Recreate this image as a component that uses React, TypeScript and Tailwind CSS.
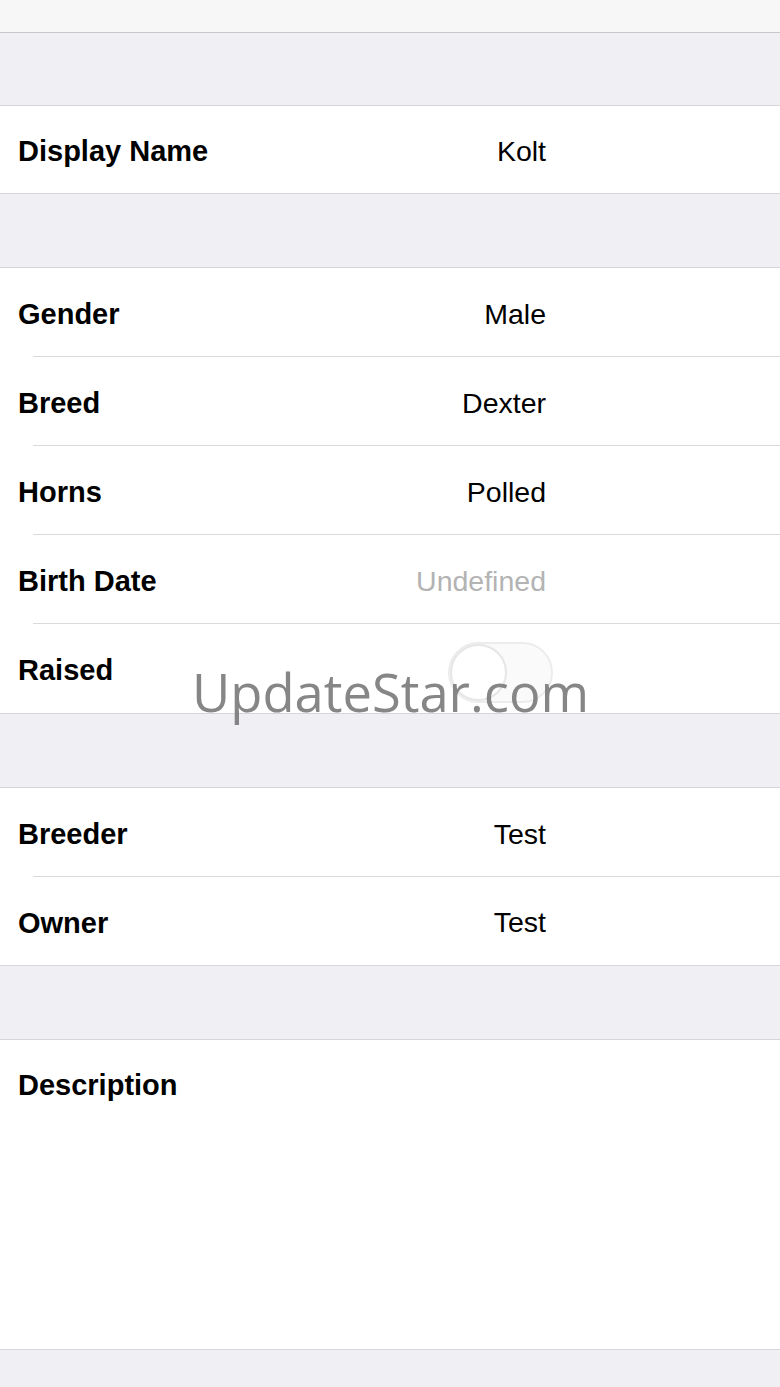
import React from "react";

const font = { fontFamily: '"Liberation Sans", Arial, sans-serif' };

function Gap({ h = "h-[73px]" }: { h?: string }) {
  return <div className={`${h} bg-[#efeff4]`} />;
}

function Row({
  label,
  value,
  muted,
  inset,
  h = "h-[89px]",
  children,
}: {
  label: string;
  value?: string;
  muted?: boolean;
  inset?: boolean;
  h?: string;
  children?: React.ReactNode;
}) {
  return (
    <div className={`relative flex ${h} items-center bg-white`}>
      <span className="pl-[18px] pt-[5px] text-[29px] font-bold text-black">{label}</span>
      <div className="ml-auto mr-[234px] flex items-center pt-[3px]">
        {value && (
          <span className={`text-[28.5px] ${muted ? "text-[#b3b3b3]" : "text-black"}`}>{value}</span>
        )}
        {children}
      </div>
      {inset && <div className="absolute bottom-0 left-[33px] right-0 h-px bg-[#dadadd]" />}
    </div>
  );
}

function Toggle() {
  return (
    <div className="-mr-[7px] mt-[4px] h-[61px] w-[105px] rounded-full border-2 border-[#ececec] bg-[#fafafa]">
      <div className="h-[57px] w-[57px] rounded-full border-2 border-[#e6e6e6] bg-white" />
    </div>
  );
}

function Group({ children }: { children: React.ReactNode }) {
  return <div className="border-y border-[#d6d6da] bg-white">{children}</div>;
}

export default function App() {
  return (
    <div style={font} className="relative h-[1387px] w-[780px] overflow-hidden bg-[#efeff4]">
      <div className="h-[33px] border-b border-[#c8c7cc] bg-[#f7f7f7]" />
      <Gap h="h-[72px]" />
      <Group>
        <Row label="Display Name" value="Kolt" h="h-[87px]" />
      </Group>
      <Gap />
      <Group>
        <Row label="Gender" value="Male" inset />
        <Row label="Breed" value="Dexter" inset />
        <Row label="Horns" value="Polled" inset />
        <Row label="Birth Date" value="Undefined" muted inset />
        <Row label="Raised">
          <Toggle />
        </Row>
      </Group>
      <Gap />
      <Group>
        <Row label="Breeder" value="Test" inset />
        <Row label="Owner" value="Test" h="h-[88px]" />
      </Group>
      <Gap />
      <Group>
        <div className="h-[309px] bg-white pt-[24px]">
          <span className="pl-[18px] text-[29px] font-bold text-black">Description</span>
        </div>
      </Group>

      <div
        className="pointer-events-none absolute left-[192px] top-[666px] text-[52.5px] leading-none text-[#7a7a7a] opacity-90"
        style={{ fontFamily: '"Open Sans", "Noto Sans", sans-serif' }}
      >
        UpdateStar.com
      </div>
    </div>
  );
}
